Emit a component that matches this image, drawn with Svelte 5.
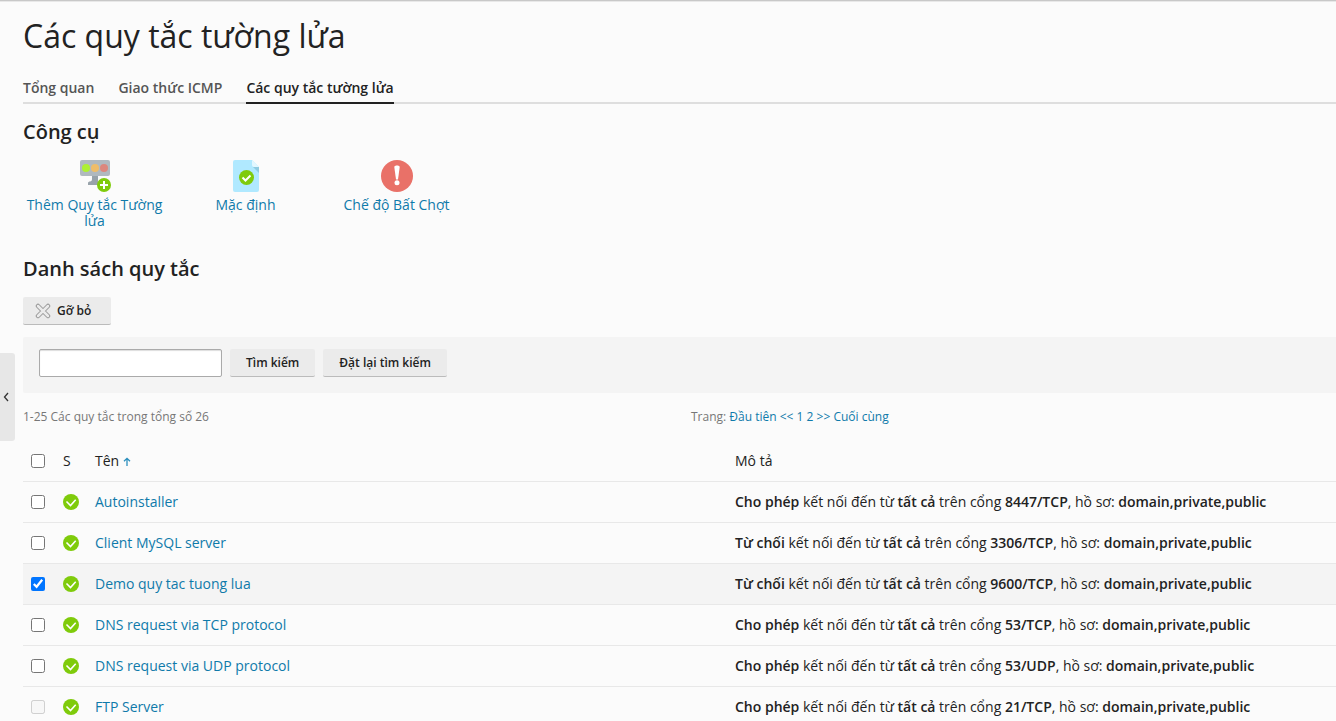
<script>
  const rules = $state([
    { name: 'Autoinstaller', action: 'Cho phép', port: '8447/TCP', checked: false },
    { name: 'Client MySQL server', action: 'Từ chối', port: '3306/TCP', checked: false },
    { name: 'Demo quy tac tuong lua', action: 'Từ chối', port: '9600/TCP', checked: true },
    { name: 'DNS request via TCP protocol', action: 'Cho phép', port: '53/TCP', checked: false },
    { name: 'DNS request via UDP protocol', action: 'Cho phép', port: '53/UDP', checked: false },
    { name: 'FTP Server', action: 'Cho phép', port: '21/TCP', checked: false, disabled: true }
  ]);
  let query = $state('');
</script>

<div class="page">
  <button class="handle" aria-label="‹">
    <svg width="6" height="10" viewBox="0 0 6 10"><path d="M5 1 1.5 5 5 9" fill="none" stroke="#333" stroke-width="1.3" /></svg>
  </button>

  <main>
    <h1>Các quy tắc tường lửa</h1>
    <nav class="tabs">
      <a href="#overview">Tổng quan</a>
      <a href="#icmp">Giao thức ICMP</a>
      <a href="#rules" class="active">Các quy tắc tường lửa</a>
    </nav>

    <h2>Công cụ</h2>
    <div class="tools">
      <a href="#add">
        <svg width="32" height="32" viewBox="0 0 32 32">
          <path d="M13 16h6v9H9v-2c0-1 1-1.500 2-1.500 1.500 0 2-1 2-2.500z" fill="#98a3aa" />
          <rect x="1" width="30" height="16" rx="2" fill="#b0b9bf" />
          <circle cx="7" cy="8" r="4" fill="#adf032" />
          <circle cx="16" cy="8" r="4" fill="#eebd69" />
          <circle cx="25" cy="8" r="4" fill="#dc877d" />
          <circle cx="25" cy="25" r="7" fill="#7fcb0b" />
          <path d="M25 21v8M21 25h8" stroke="#fff" stroke-width="2" />
        </svg>
        <span>Thêm Quy tắc Tường lửa</span>
      </a>
      <a href="#defaults">
        <svg width="32" height="32" viewBox="0 0 32 32">
          <path d="M5 0h17l7 7v23a2 2 0 0 1-2 2H5a2 2 0 0 1-2-2V2a2 2 0 0 1 2-2z" fill="#b0e9ff" />
          <path d="M23 7h6v6z" fill="#8fcbe1" />
          <path d="M22 0l7 7h-5a2 2 0 0 1-2-2z" fill="#e2f7ff" />
          <circle cx="16.500" cy="17.500" r="7.500" fill="#7fcb0b" />
          <path d="m12.500 17.500 3 3 5-5" fill="none" stroke="#fff" stroke-width="2" />
        </svg>
        <span>Mặc định</span>
      </a>
      <a href="#panic">
        <svg width="32" height="32" viewBox="0 0 32 32">
          <circle cx="16" cy="16" r="16" fill="#e97168" />
          <path d="M13.300 7c0-2 5.400-2 5.400 0l-1.700 12.500h-2z" fill="#fff" />
          <circle cx="16" cy="22.700" r="2.500" fill="#fff" />
        </svg>
        <span>Chế độ Bất Chợt</span>
      </a>
    </div>

    <h2>Danh sách quy tắc</h2>
    <div class="actions">
      <button class="btn remove">
        <svg width="16" height="16" viewBox="0 0 16 16">
          <path d="M3 3 13 13M13 3 3 13" stroke="#999" stroke-width="4.500" stroke-linecap="round" />
          <path d="M3 3 13 13M13 3 3 13" stroke="#ebebeb" stroke-width="2.500" stroke-linecap="round" />
        </svg>
        Gỡ bỏ
      </button>
    </div>

    <form class="search" onsubmit={(e) => e.preventDefault()}>
      <input type="text" aria-label="Tìm kiếm" bind:value={query} />
      <button class="btn" type="submit">Tìm kiếm</button>
      <button class="btn" type="button" onclick={() => (query = '')}>Đặt lại tìm kiếm</button>
    </form>

    <div class="paging">
      <span>1-25 Các quy tắc trong tổng số 26</span>
      <span>Trang: <a href="#first">Đầu tiên</a> <a href="#prev">&lt;&lt;</a> <a href="#1">1</a> <a href="#2">2</a> <a href="#next">&gt;&gt;</a> <a href="#last">Cuối cùng</a></span>
    </div>

    <table>
      <colgroup><col class="c-check" /><col class="c-state" /><col class="c-name" /><col /></colgroup>
      <thead>
        <tr>
          <th><input type="checkbox" aria-label="Tên" /></th>
          <th>S</th>
          <th>Tên <svg width="8" height="9" viewBox="0 0 8 9"><path d="M4 9V1.500M1 4.300 4 1.300l3 3" fill="none" stroke="#2c8fbd" stroke-width="1.300" /></svg></th>
          <th>Mô tả</th>
        </tr>
      </thead>
      <tbody>
        {#each rules as rule}
          <tr class:selected={rule.checked}>
            <td><input type="checkbox" aria-label={rule.name} bind:checked={rule.checked} disabled={rule.disabled} /></td>
            <td>
              <svg class="ok" width="16" height="16" viewBox="0 0 16 16">
                <circle cx="8" cy="8" r="8" fill="#7fcb0b" />
                <path d="m3.500 7.500 4 4L12.700 5.800" fill="none" stroke="#fff" stroke-width="1.600" />
              </svg>
            </td>
            <td><a href="#rule">{rule.name}</a></td>
            <td><b>{rule.action}</b> kết nối đến từ <b>tất cả</b> trên cổng <b>{rule.port}</b>, hồ sơ: <b>domain,private,public</b></td>
          </tr>
        {/each}
      </tbody>
    </table>
  </main>
</div>

<style>
  :global(body) {
    margin: 0;
    background: #fbfbfb;
  }
  .page {
    position: relative;
    box-sizing: border-box;
    height: 100vh;
    overflow: hidden;
    border-top: 1px solid #c8c8c8;
    box-shadow: inset 0 1px 0 #e8e8e8;
    background: #fbfbfb;
    color: #222;
    font: 14px/16px "Open Sans", sans-serif;
  }
  main {
    padding: 15px 0 0 23px;
  }
  a {
    color: #0f7aaa;
    text-decoration: none;
  }
  h1 {
    margin: 0;
    font-size: 32px;
    line-height: 40px;
    font-weight: 400;
  }
  h2 {
    margin: 0;
    font-size: 20px;
    line-height: 24px;
    font-weight: 600;
  }
  b {
    font-weight: 600;
  }
  .tabs {
    display: flex;
    gap: 24px;
    margin: 16px 0;
    box-shadow: inset 0 -2px 0 #dedede;
  }
  .tabs a {
    padding: 8px 0 6px;
    border-bottom: 2px solid transparent;
    color: #555;
    font-weight: 600;
  }
  .tabs a.active {
    border-color: #222;
    color: #222;
  }
  .tools {
    display: flex;
    gap: 8px;
    margin: 16px 0 28px;
  }
  .tools a {
    display: flex;
    flex-direction: column;
    align-items: center;
    gap: 5px;
    width: 143px;
    text-align: center;
  }
  .actions {
    display: flex;
    margin: 16px 0 12px;
  }
  .btn {
    display: inline-flex;
    align-items: center;
    box-sizing: border-box;
    height: 28px;
    padding: 0 16px;
    border: 0;
    border-bottom: 1px solid #bbb;
    border-radius: 2px;
    background: #ebebeb;
    color: #222;
    font: 600 12px/16px "Open Sans", sans-serif;
  }
  .remove {
    gap: 6px;
    padding: 0 20px 0 12px;
  }
  .search {
    display: flex;
    gap: 8px;
    padding: 12px 16px 16px;
    border-radius: 2px 0 0 2px;
    background: #f4f4f4;
  }
  .search input {
    box-sizing: border-box;
    width: 183px;
    height: 28px;
    padding: 0 8px;
    border: 1px solid #aaa;
    border-radius: 2px;
    background: #fff;
    box-shadow: inset 0 1px 1px #ddd;
    font: inherit;
  }
  .paging {
    display: grid;
    grid-template-columns: 50vw 1fr;
    padding: 16px 0;
    color: #777;
    font-size: 12px;
  }
  table {
    width: 100%;
    table-layout: fixed;
    border-collapse: separate;
    border-spacing: 0;
  }
  .c-check,
  .c-state {
    width: 32px;
  }
  .c-name {
    width: calc(50vw - 28px);
  }
  th,
  td {
    box-sizing: border-box;
    height: 41px;
    padding: 0 8px;
    border-bottom: 1px solid #e8e8e8;
    text-align: left;
    font-weight: 400;
    white-space: nowrap;
  }
  .selected td {
    background: #f4f4f4;
  }
  td input,
  th input {
    display: block;
    width: 14px;
    height: 14px;
    margin: 0;
  }
  .ok {
    display: block;
  }
  .handle {
    position: absolute;
    top: 352px;
    left: 0;
    width: 15px;
    height: 88px;
    padding: 0 6px 0 3px;
    border: 0;
    border-radius: 0 3px 3px 0;
    background: #e7e7e7;
  }
</style>
